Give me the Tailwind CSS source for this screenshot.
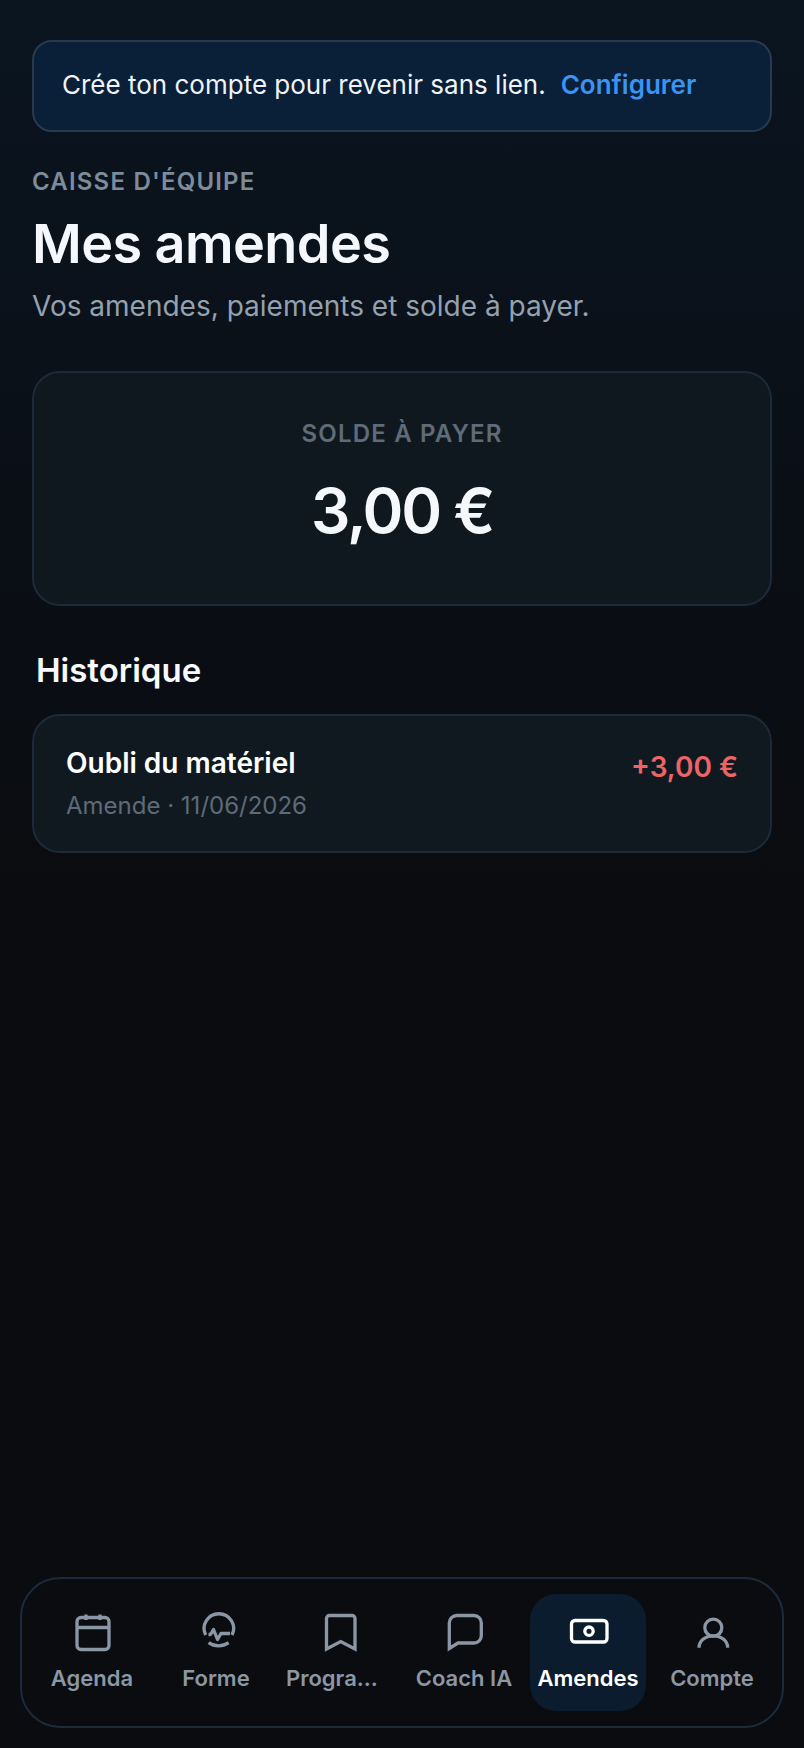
<!DOCTYPE html>
<html lang="fr">
<head>
  <meta charset="UTF-8">
  <meta name="viewport" content="width=device-width, initial-scale=1.0">
  <title>Mes amendes</title>
  <script src="https://cdn.jsdelivr.net/npm/@tailwindcss/browser@4"></script>
</head>
<body class="bg-[#0a0c10] font-['Inter',sans-serif] text-white">
  <div class="relative h-[1748px] w-[804px] overflow-hidden bg-gradient-to-b from-[#0a1520] via-[#0a0f16] via-30% to-[#0a0c10] to-50%">
    <main class="px-8 pt-10">
      <!-- Banner -->
      <div class="flex h-[92px] items-center rounded-[20px] border-2 border-[#2a3a4e] bg-[#0a2039] px-[28px] pb-[3px] text-[26px]">
        <span class="text-[#eef3f8]">Crée ton compte pour revenir sans lien.</span>
        <span class="ml-[15px] font-semibold text-[#3b93f3]">Configurer</span>
      </div>

      <!-- Header -->
      <p class="mt-[36px] text-[24px] leading-[28px] font-semibold tracking-[1.2px] text-[#7e8b9a]">CAISSE D'ÉQUIPE</p>
      <h1 class="mt-[16px] text-[54px] leading-[64px] font-semibold tracking-[-0.6px] text-[#f4f7fb]">Mes amendes</h1>
      <p class="mt-[12px] text-[28px] leading-[36px] text-[#94a1af]">Vos amendes, paiements et solde à payer.</p>

      <!-- Balance -->
      <section class="mt-[47px] flex h-[235px] flex-col items-center rounded-[28px] border-2 border-[#1d2a3a] bg-[#10181f] pt-[47px]">
        <p class="text-[24px] leading-[28px] font-semibold tracking-[1.2px] text-[#5f6b78]">SOLDE À PAYER</p>
        <p class="mt-[27px] text-[62px] leading-[72px] font-semibold tracking-[-2.300px] text-[#f4f7fb]">3,00 €</p>
      </section>

      <!-- History -->
      <h2 class="mt-[44px] ml-1 text-[33px] leading-[40px] font-semibold text-[#f7f9fc]">Historique</h2>
      <div class="mt-[24px] flex h-[139px] justify-between rounded-[28px] border-2 border-[#1d2a3a] bg-[#111920] px-[32px] pt-[29px]">
        <div>
          <p class="text-[28px] leading-[36px] font-semibold text-white">Oubli du matériel</p>
          <p class="mt-[9px] text-[24px] leading-[32px] text-[#5e6a77]">Amende · 11/06/2026</p>
        </div>
        <p class="mt-[4px] text-[28px] leading-[36px] font-semibold text-[#ee6464]">+3,00 €</p>
      </div>
    </main>

    <!-- Bottom nav -->
    <nav class="absolute top-[1577px] left-[20px] grid h-[151px] w-[764px] grid-cols-6 items-center rounded-[40px] border-2 border-[#1d2a3a] bg-[#0a0c10] px-[8px] text-[22px] leading-[28px] font-semibold text-[#8b97a5]">
      <a class="mx-1 flex h-[117px] flex-col items-center pt-[17px]">
        <svg class="h-[44px] w-[44px]" viewBox="0 0 44 44" fill="none" stroke="currentColor" stroke-width="3.300" stroke-linejoin="round">
          <rect x="7" y="6.500" width="32" height="32" rx="4"/><path d="M7 16.500h32M16 3.500v5.500M30 3.500v5.500"/>
        </svg>
        <span class="mt-[9px]">Agenda</span>
      </a>
      <a class="mx-1 flex h-[117px] flex-col items-center pt-[17px]">
        <svg class="h-[44px] w-[44px]" viewBox="0 0 44 44" fill="none" stroke="currentColor" stroke-width="3.300" stroke-linejoin="round">
          <path d="M11.700 24A14.700 14.700 0 1 1 38 24M14.600 31.700A17.200 17.200 0 0 0 34.600 31.700"/><path d="M14.500 23.500h2l3-5 4 10 3.500-6h9"/>
        </svg>
        <span class="mt-[9px]">Forme</span>
      </a>
      <a class="mx-1 flex h-[117px] flex-col items-center pt-[17px]">
        <svg class="h-[44px] w-[44px]" viewBox="0 0 44 44" fill="none" stroke="currentColor" stroke-width="3.300">
          <path d="M8.500 38V7.500a3 3 0 0 1 3-3H34a3 3 0 0 1 3 3V38L22.700 30.500z"/>
        </svg>
        <span class="mt-[9px] w-[108px] whitespace-nowrap">Progra...</span>
      </a>
      <a class="mx-1 flex h-[117px] flex-col items-center pt-[17px]">
        <svg class="h-[44px] w-[44px]" viewBox="0 0 44 44" fill="none" stroke="currentColor" stroke-width="3.300">
          <path d="M7.300 37.500V12a7.500 7.500 0 0 1 7.500-7.500H32a7.300 7.300 0 0 1 7.300 7.300v12.900a7.300 7.300 0 0 1-7.300 7.300H16z"/>
        </svg>
        <span class="mt-[9px] whitespace-nowrap">Coach IA</span>
      </a>
      <a class="mx-1 flex h-[117px] flex-col items-center rounded-[26px] bg-[#0a1c2d] pt-[17px] text-white">
        <svg class="h-[44px] w-[44px]" viewBox="0 0 44 44" fill="none" stroke="currentColor" stroke-width="3.300">
          <rect x="5.500" y="9.500" width="35.500" height="21.500" rx="3.500"/><circle cx="23" cy="20.200" r="4.200"/>
        </svg>
        <span class="mt-[9px] whitespace-nowrap">Amendes</span>
      </a>
      <a class="mx-1 flex h-[117px] flex-col items-center pt-[17px]">
        <svg class="h-[44px] w-[44px]" viewBox="0 0 44 44" fill="none" stroke="currentColor" stroke-width="3.300">
          <circle cx="23.300" cy="16.700" r="8.500"/><path d="M9 36.700C9 30 15 24.800 23.300 24.800S37.700 30 37.700 36.700"/>
        </svg>
        <span class="mt-[9px]">Compte</span>
      </a>
    </nav>
  </div>
</body>
</html>
